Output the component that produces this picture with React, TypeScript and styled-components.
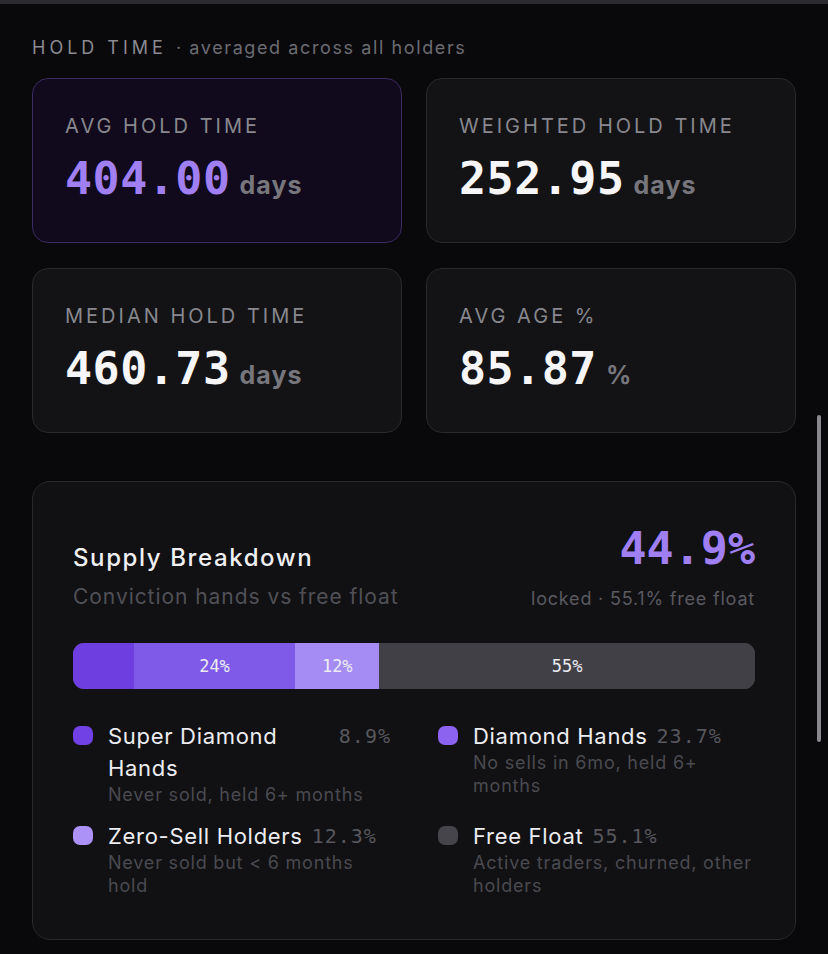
import React from 'react';
import styled, { createGlobalStyle } from 'styled-components';

const GlobalStyle = createGlobalStyle`
  html, body {
    margin: 0;
    padding: 0;
    background: #09090b;
  }
  body {
    font-family: Inter, "Noto Sans", sans-serif;
    color: #ececf0;
  }
`;

const mono = `"DejaVu Sans Mono", "Liberation Mono", monospace`;

const Page = styled.div`
  width: 828px;
  height: 954px;
  overflow: hidden;
  position: relative;
  background: #09090b;
`;

const TopStrip = styled.div`
  height: 4px;
  background: #2c2c30;
`;

const Content = styled.div`
  padding: 33px 32px 0 32px;
`;

const SectionHeader = styled.div`
  display: flex;
  align-items: baseline;
  gap: 9px;
  height: 26px;
  margin-bottom: 15px;
`;

const SectionTitle = styled.span`
  font-size: 18px;
  letter-spacing: 4px;
  color: #8a8a90;
`;

const SectionNote = styled.span`
  font-size: 18px;
  letter-spacing: 1.6px;
  color: #6c6c72;
`;

const StatGrid = styled.div`
  display: grid;
  grid-template-columns: 1fr 1fr;
  gap: 25px 24px;
`;

const StatCard = styled.div<{ $accent?: boolean }>`
  height: 165px;
  box-sizing: border-box;
  border-radius: 16px;
  padding: 34px 32px 0 32px;
  background: ${(p) => (p.$accent ? '#110a1c' : '#131315')};
  border: 1.5px solid ${(p) => (p.$accent ? '#3b2a63' : '#29292d')};
`;

const StatLabel = styled.div`
  font-size: 20px;
  letter-spacing: 3px;
  color: #88888e;
  line-height: 26px;
`;

const StatValueRow = styled.div`
  display: flex;
  align-items: baseline;
  gap: 9px;
  margin-top: 17px;
`;

const StatValue = styled.span<{ $accent?: boolean }>`
  font-family: ${mono};
  font-weight: 700;
  font-size: 45px;
  letter-spacing: 0.5px;
  line-height: 1;
  color: ${(p) => (p.$accent ? '#9f7ff2' : '#f6f6f8')};
`;

const StatUnit = styled.span`
  font-size: 25px;
  font-weight: 700;
  letter-spacing: 1px;
  color: #76767c;
`;

const SupplyCard = styled.div`
  margin-top: 48px;
  height: 459px;
  box-sizing: border-box;
  border-radius: 18px;
  border: 1.5px solid #29292d;
  background: #111113;
  padding: 44px 40px 0 40px;
`;

const SupplyHead = styled.div`
  display: flex;
  justify-content: space-between;
  align-items: flex-start;
`;

const SupplyTitle = styled.div`
  font-size: 24px;
  font-weight: 500;
  letter-spacing: 1.6px;
  color: #f0f0f3;
  margin-top: 17px;
`;

const SupplySub = styled.div`
  font-size: 21px;
  letter-spacing: 0.95px;
  color: #505056;
  margin-top: 12px;
`;

const SupplyRight = styled.div`
  text-align: right;
`;

const LockedValue = styled.div`
  font-family: ${mono};
  font-weight: 700;
  font-size: 45px;
  line-height: 1;
  color: #9f7ff2;
`;

const LockedNote = styled.div`
  font-size: 18px;
  letter-spacing: 0.8px;
  color: #5a5a60;
  margin-top: 17px;
`;

const Bar = styled.div`
  display: flex;
  height: 46px;
  border-radius: 11px;
  overflow: hidden;
  margin-top: 34px;
  background: #404046;
`;

const BarSegment = styled.div<{ $color: string }>`
  display: flex;
  align-items: center;
  justify-content: center;
  background: ${(p) => p.$color};
  font-family: ${mono};
  font-size: 17px;
  color: #ececf2;
`;

const Legend = styled.div`
  display: grid;
  grid-template-columns: 318px 319px;
  column-gap: 47px;
  row-gap: 14px;
  margin-top: 31px;
`;

const LegendItem = styled.div`
  display: flex;
  gap: 15px;
`;

const Dot = styled.span<{ $color: string }>`
  flex: none;
  width: 20px;
  height: 19px;
  border-radius: 7px;
  margin-top: 6px;
  background: ${(p) => p.$color};
`;

const LegendBody = styled.div`
  flex: 1;
`;

const LegendHead = styled.div<{ $split?: boolean }>`
  display: flex;
  justify-content: ${(p) => (p.$split ? 'space-between' : 'flex-start')};
  align-items: flex-start;
  gap: 9px;
`;

const LegendName = styled.span`
  font-size: 22px;
  letter-spacing: 0.7px;
  line-height: 32px;
  color: #ededf1;
`;

const LegendPct = styled.span`
  font-family: ${mono};
  font-size: 20px;
  letter-spacing: 1px;
  line-height: 32px;
  color: #57575d;
  white-space: nowrap;
`;

const LegendDesc = styled.div`
  font-size: 18px;
  letter-spacing: 0.8px;
  line-height: 23px;
  color: #4a4a50;
  margin-top: -1px;
`;

const Scrollbar = styled.div`
  position: absolute;
  right: 7px;
  top: 415px;
  width: 4px;
  height: 327px;
  border-radius: 2px;
  background: #8a8a8e;
`;

const stats = [
  { label: 'AVG HOLD TIME', value: '404.00', unit: 'days', accent: true },
  { label: 'WEIGHTED HOLD TIME', value: '252.95', unit: 'days' },
  { label: 'MEDIAN HOLD TIME', value: '460.73', unit: 'days' },
  { label: 'AVG AGE %', value: '85.87', unit: '%' },
];

const segments = [
  { pct: 8.9, color: '#6e3ee0', label: '' },
  { pct: 23.7, color: '#7f5ae9', label: '24%' },
  { pct: 12.3, color: '#a58cf4', label: '12%' },
  { pct: 55.1, color: '#404046', label: '55%' },
];

const legend = [
  { name: 'Super Diamond Hands', pct: '8.9%', desc: 'Never sold, held 6+ months', color: '#7241e6', split: true },
  { name: 'Diamond Hands', pct: '23.7%', desc: 'No sells in 6mo, held 6+ months', color: '#8b63f0' },
  { name: 'Zero-Sell Holders', pct: '12.3%', desc: 'Never sold but < 6 months hold', color: '#ac92f6' },
  { name: 'Free Float', pct: '55.1%', desc: 'Active traders, churned, other holders', color: '#45454b' },
];

const App: React.FC = () => {
  return (
    <Page>
      <GlobalStyle />
      <TopStrip />
      <Content>
        <SectionHeader>
          <SectionTitle>HOLD TIME</SectionTitle>
          <SectionNote>· averaged across all holders</SectionNote>
        </SectionHeader>

        <StatGrid>
          {stats.map((s) => (
            <StatCard key={s.label} $accent={s.accent}>
              <StatLabel>{s.label}</StatLabel>
              <StatValueRow>
                <StatValue $accent={s.accent}>{s.value}</StatValue>
                <StatUnit>{s.unit}</StatUnit>
              </StatValueRow>
            </StatCard>
          ))}
        </StatGrid>

        <SupplyCard>
          <SupplyHead>
            <div>
              <SupplyTitle>Supply Breakdown</SupplyTitle>
              <SupplySub>Conviction hands vs free float</SupplySub>
            </div>
            <SupplyRight>
              <LockedValue>44.9%</LockedValue>
              <LockedNote>locked · 55.1% free float</LockedNote>
            </SupplyRight>
          </SupplyHead>

          <Bar>
            {segments.map((seg, i) => (
              <BarSegment key={i} $color={seg.color} style={{ width: `${seg.pct}%` }}>
                {seg.label}
              </BarSegment>
            ))}
          </Bar>

          <Legend>
            {legend.map((item) => (
              <LegendItem key={item.name}>
                <Dot $color={item.color} />
                <LegendBody>
                  <LegendHead $split={item.split}>
                    <LegendName>{item.name}</LegendName>
                    <LegendPct>{item.pct}</LegendPct>
                  </LegendHead>
                  <LegendDesc>{item.desc}</LegendDesc>
                </LegendBody>
              </LegendItem>
            ))}
          </Legend>
        </SupplyCard>
      </Content>
      <Scrollbar />
    </Page>
  );
};

export default App;
